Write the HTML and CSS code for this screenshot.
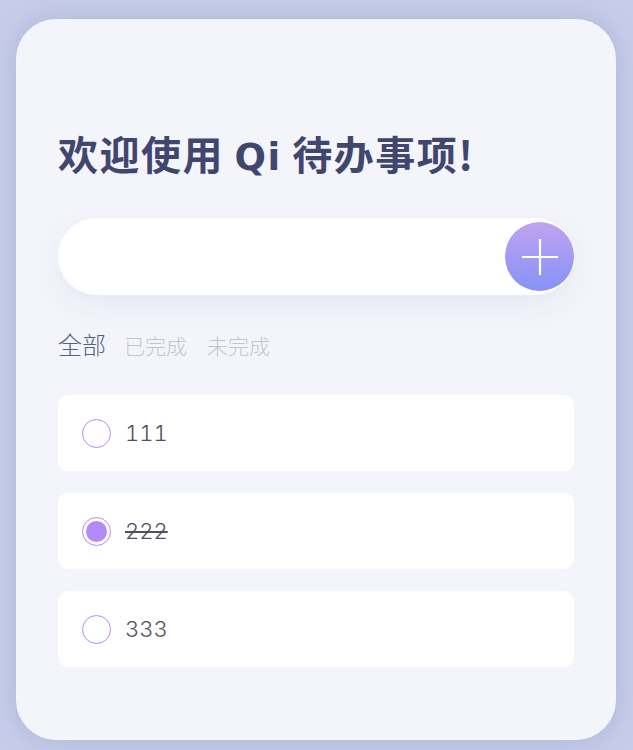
FILE: index.html
```html
<!DOCTYPE html>
<html lang="zh">
<head>
<meta charset="utf-8">
<link rel="stylesheet" href="styles.css">
</head>
<body>
  <main class="card">
    <h1 class="title">欢迎使用 <span class="latin">Qi</span> 待办事项!</h1>
    <div class="add-bar">
      <input class="add-input" type="text" aria-label="新任务">
      <button class="add-btn" aria-label="添加">
        <svg width="36" height="36" viewBox="0 0 36 36"><path d="M18 0V36M0 18H36" stroke="#fff" stroke-width="2.2" fill="none"/></svg>
      </button>
    </div>
    <nav class="tabs">
      <span class="tab active">全部</span>
      <span class="tab">已完成</span>
      <span class="tab">未完成</span>
    </nav>
    <ul class="list">
      <li class="item"><span class="check"></span><span class="text">111</span></li>
      <li class="item done"><span class="check"></span><span class="text">222</span></li>
      <li class="item"><span class="check"></span><span class="text">333</span></li>
    </ul>
  </main>
</body>
</html>
```
FILE: styles.css
```css
* { box-sizing: border-box; }
html, body { margin: 0; }
body {
  width: 633px;
  height: 750px;
  background: #c6cce9;
  padding: 19px 17px 0 16px;
  font-family: "Inter", "Noto Sans CJK SC", sans-serif;
  overflow: hidden;
}
.card {
  width: 600px;
  height: 721px;
  background: #f4f5fb;
  border-radius: 40px;
  box-shadow: 0 0 24px rgba(130, 140, 190, 0.35);
  padding: 110px 42px 0 42px;
}
.title {
  margin: 0;
  height: 48px;
  font-family: "Noto Sans CJK SC", sans-serif;
  font-size: 40px;
  line-height: 48px;
  font-weight: 700;
  color: #41466f;
  letter-spacing: 1.5px;
}
.latin {
  font-family: "DejaVu Sans", sans-serif;
  font-weight: 700;
  font-size: 37px;
  line-height: 1;
}
.add-bar {
  margin-top: 41px;
  height: 77px;
  background: #fff;
  border-radius: 39px;
  display: flex;
  align-items: center;
  box-shadow: 0 10px 30px rgba(90, 100, 150, 0.09);
}
.add-input {
  flex: 1;
  border: 0;
  outline: none;
  background: transparent;
  height: 100%;
  padding: 0 30px;
  font-size: 20px;
}
.add-btn {
  width: 69px;
  height: 69px;
  border-radius: 50%;
  border: 0;
  padding: 0;
  background: linear-gradient(180deg, #c1a3f2 0%, #8592f5 100%);
  display: flex;
  align-items: center;
  justify-content: center;
}
.tabs {
  margin-top: 31px;
  display: flex;
  align-items: baseline;
  gap: 20px;
  height: 39px;
}
.tab {
  font-family: "Noto Sans CJK SC", sans-serif;
  font-size: 21px;
  color: #c3c4d2;
  font-weight: 300;
}
.tab.active {
  font-size: 24px;
  color: #56607f;
  margin-right: -2px;
}
.list {
  list-style: none;
  margin: 30px 0 0;
  padding: 0;
  display: flex;
  flex-direction: column;
  gap: 22px;
}
.item {
  height: 76px;
  background: #fff;
  border-radius: 10px;
  display: flex;
  align-items: center;
  padding-left: 24px;
  gap: 14px;
}
.check {
  width: 29px;
  height: 29px;
  border-radius: 50%;
  border: 1px solid #b48af8;
  display: flex;
  align-items: center;
  justify-content: center;
}
.done .check::after {
  content: "";
  width: 21px;
  height: 21px;
  border-radius: 50%;
  background: #b388f8;
}
.text {
  font-size: 22px;
  color: #50505c;
  font-weight: 300;
  font-feature-settings: "tnum" 1;
}
.done .text { text-decoration: line-through; }
```
